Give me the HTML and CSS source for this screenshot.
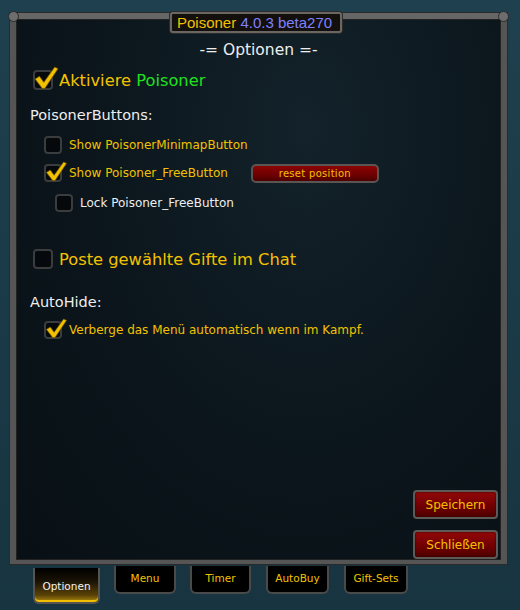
FILE: index.html
```html
<!DOCTYPE html>
<html lang="de">
<head>
<meta charset="UTF-8">
<title>Poisoner Optionen</title>
<link rel="stylesheet" href="styles.css">
</head>
<body>
    <div class="frame">
        <div class="title"><span class="gold">Poisoner</span> <span class="ver">4.0.3 beta270</span></div>
        <div class="content">
            <div class="heading">-= Optionen =-</div>

            <div class="row big r-main">
                <span class="cb big-cb"><svg class="tick" width="26" height="24" viewBox="0 0 22 22"><polygon points="1,12 5,9.5 9,15 19,1 22,2.5 10,20.5 7.5,20.5" /></svg></span>
                <span class="gold">Aktiviere</span>&nbsp;<span class="green">Poisoner</span>
            </div>

            <div class="section r-btns">PoisonerButtons:</div>

            <div class="row small r-1 ind1">
                <span class="cb"></span>
                <span class="gold">Show PoisonerMinimapButton</span>
            </div>
            <div class="row small r-2 ind1">
                <span class="cb"><svg class="tick" width="22" height="21" viewBox="0 0 22 22"><polygon points="1,12 5,9.5 9,15 19,1 22,2.5 10,20.5 7.5,20.5" /></svg></span>
                <span class="gold">Show Poisoner_FreeButton</span>
                <button class="reset">reset position</button>
            </div>
            <div class="row small r-3 ind2">
                <span class="cb"></span>
                <span class="white">Lock Poisoner_FreeButton</span>
            </div>

            <div class="row big r-chat">
                <span class="cb big-cb"></span>
                <span class="gold">Poste gewählte Gifte im Chat</span>
            </div>

            <div class="section r-hide">AutoHide:</div>

            <div class="row small r-4 ind1">
                <span class="cb"><svg class="tick" width="22" height="21" viewBox="0 0 22 22"><polygon points="1,12 5,9.5 9,15 19,1 22,2.5 10,20.5 7.5,20.5" /></svg></span>
                <span class="gold">Verberge das Menü automatisch wenn im Kampf.</span>
            </div>
        </div>
        <div class="actions">
            <button class="red">Speichern</button>
            <button class="red">Schließen</button>
        </div>
    </div>
    <div class="tabs">
        <div class="tab active w1">Optionen</div>
        <div class="tab w2">Menu</div>
        <div class="tab w3">Timer</div>
        <div class="tab w4">AutoBuy</div>
        <div class="tab w5">Gift-Sets</div>
    </div>
</body>
</html>
```

FILE: styles.css
```css
* {
    margin: 0;
    padding: 0;
    box-sizing: border-box;
}
body {
    width: 520px;
    height: 610px;
    overflow: hidden;
    background: linear-gradient(180deg, #1f404e 0%, #1b3a47 50%, #173440 100%);
    font-family: "DejaVu Sans", "Liberation Sans", sans-serif;
}
.gold {
    color: #f2c200;
}
.green {
    color: #1fe01f;
}
.white {
    color: #eeeeee;
}
.ver {
    color: #8080ff;
}
.frame {
    position: relative;
    margin: 13px 0 0 10px;
    width: 497px;
    height: 551px;
    border: 6px solid #555555;
    border-top-color: #666;
    border-bottom-width: 4px;
    background: radial-gradient(ellipse at 60% 20%, #13222b 0%, #0b151b 55%, #081015 100%);
    box-shadow: inset 0 0 0 1px #222, 0 0 0 1px #2a2a2a;
    display: flex;
    flex-direction: column;
}
.frame::before,
.frame::after {
    content: "";
    position: absolute;
    top: -8px;
    width: 9px;
    height: 9px;
    border-radius: 50%;
    background: #6d6d6d;
    border: 1px solid #2a2a2a;
}
.frame::before {
    left: -8px;
}
.frame::after {
    right: -8px;
}
.title {
    position: absolute;
    left: 154px;
    top: -7px;
    width: 172px;
    height: 21px;
    background: #120f0c;
    border: 2px solid #6a6763;
    border-radius: 3px;
    box-shadow: 0 0 0 1px #2b2b2b;
    font-family: "Liberation Sans", Arial, sans-serif;
    font-size: 15px;
    line-height: 17px;
    padding-left: 5px;
    white-space: nowrap;
    z-index: 1;
}
.content {
    padding: 21px 0 0 17px;
    font-size: 16px;
}
.heading {
    color: #eeeeee;
    text-align: center;
    height: 20px;
    line-height: 20px;
    font-size: 15.5px;
    margin-right: 17px;
}
.row {
    display: flex;
    align-items: center;
    white-space: nowrap;
}
.row.big {
    height: 22px;
    font-size: 16.3px;
}
.row.small {
    height: 20px;
    font-size: 12px;
}
.section {
    color: #eeeeee;
    font-size: 14.5px;
    height: 18px;
    line-height: 18px;
    margin-left: -3px;
}
.ind1 {
    padding-left: 11px;
}
.ind2 {
    padding-left: 22px;
}
.r-main { margin-top: 9px; }
.r-btns { margin-top: 15px; }
.r-1 { margin-top: 11px; }
.r-2 { margin-top: 8px; }
.r-3 { margin-top: 10px; }
.r-chat { margin-top: 35px; }
.r-hide { margin-top: 23px; }
.r-4 { margin-top: 9px; }
.cb {
    position: relative;
    flex: none;
    width: 18px;
    height: 18px;
    margin-right: 7px;
    border: 2px solid #3b3c3d;
    border-radius: 4px;
    background: #05090c;
}
.cb.big-cb {
    width: 20px;
    height: 20px;
    margin-right: 6px;
}
.tick {
    position: absolute;
    left: -1px;
    top: -5px;
}
.tick polygon {
    fill: #f2c200;
    stroke: #7a5a00;
    stroke-width: 0.8;
}
.big-cb .tick {
    left: -2px;
    top: -6px;
}
.reset {
    margin-left: 23px;
    width: 128px;
    height: 19px;
    border: 2px solid #5a5552;
    border-radius: 5px;
    background: linear-gradient(180deg, #8c0505 0%, #6e0000 60%, #4c0000 100%);
    color: #f2c200;
    font-family: "DejaVu Sans", sans-serif;
    font-size: 10px;
    letter-spacing: 0.3px;
}
.actions {
    margin-top: auto;
    display: flex;
    flex-direction: column;
    align-items: flex-end;
    gap: 11px;
    padding: 0 3px 1px 0;
}
.red {
    width: 85px;
    height: 29px;
    border: 2px solid #5d5a57;
    border-radius: 4px;
    background: linear-gradient(180deg, #920808 0%, #720000 55%, #4e0000 100%);
    box-shadow: inset 0 0 2px #200;
    color: #f2c200;
    font-family: "DejaVu Sans", sans-serif;
    font-size: 12px;
}
.tabs {
    display: flex;
    align-items: flex-start;
    gap: 15px;
    margin-left: 33px;
}
.tab {
    height: 28px;
    margin-top: 2px;
    background: #000;
    border: 2px solid #4a4a4a;
    border-top: none;
    border-radius: 0 0 6px 6px;
    color: #f2c200;
    font-family: "DejaVu Sans", sans-serif;
    font-size: 10.5px;
    text-align: center;
    line-height: 24px;
}
.tab.active {
    height: 36px;
    margin-top: 4px;
    border: 2px solid #57544f;
    border-top: none;
    background: linear-gradient(180deg, #000 0%, #1a1306 40%, #5a4206 80%, #b08a10 100%);
    box-shadow: inset 0 -2px 0 #f0c000;
    color: #f4f4f4;
    line-height: 36px;
}
.w1 { width: 67px; }
.w2 { width: 62px; margin-left: -1px; }
.w3 { width: 61px; margin-left: -1px; }
.w4 { width: 63px; }
.w5 { width: 64px; }
```
